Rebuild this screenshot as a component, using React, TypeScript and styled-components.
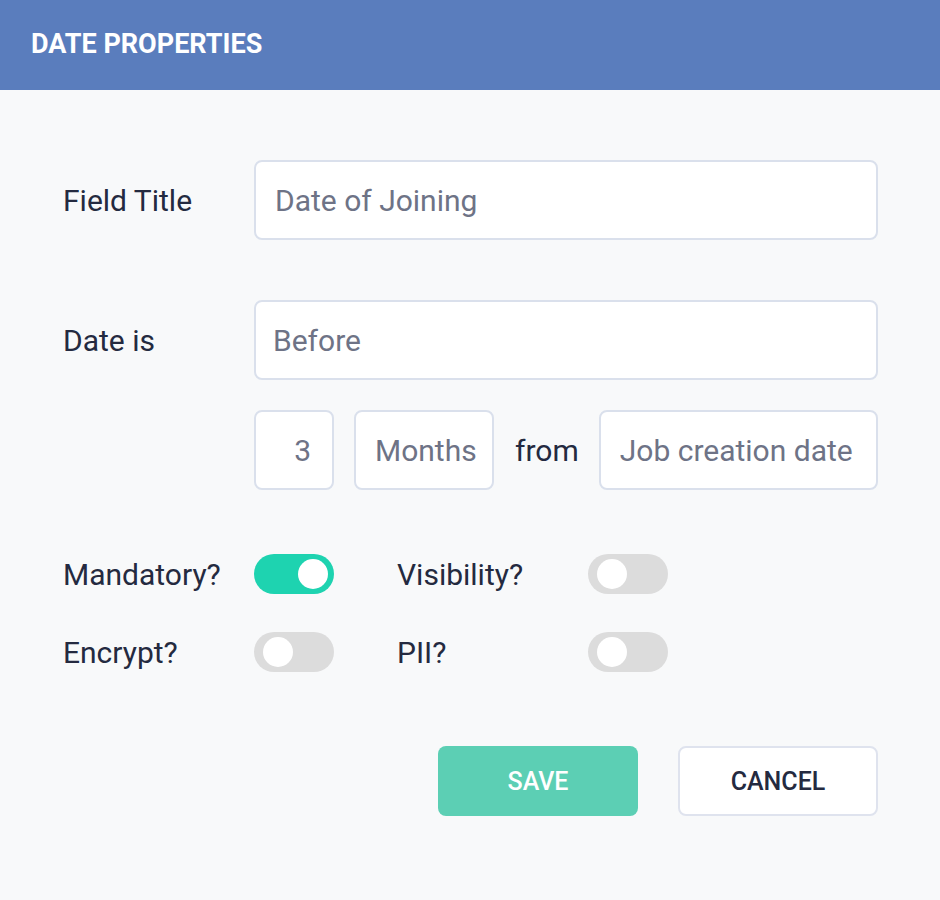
import React, { useState } from 'react';
import styled, { createGlobalStyle } from 'styled-components';

const GlobalStyle = createGlobalStyle`
    body {
        margin: 0;
        font-family: Roboto, "Liberation Sans", sans-serif;
        background: #f8f9fa;
    }
`

type ToggleProps = {
    label: string;
    initValue?: boolean;
}

const Toggle: React.FC<ToggleProps> = ({ label, initValue = false }) => {
    const [on, setOn] = useState(initValue);
    return <>
        <Label>{label}</Label>
        <Switch on={on} onClick={() => setOn(!on)} aria-label={label}>
            <Knob on={on} />
        </Switch>
    </>
}

export default function App() {
    return <Page>
        <GlobalStyle />
        <Header>
            <Title>DATE PROPERTIES</Title>
        </Header>
        <Body>
            <FormRow>
                <Label>Field Title</Label>
                <Field placeholder="Date of Joining" />
            </FormRow>
            <FormRow gap={60}>
                <Label>Date is</Label>
                <Field placeholder="Before" pad={17} />
            </FormRow>
            <RangeRow>
                <NumberField placeholder="3" />
                <Field placeholder="Months" width={140} />
                <FromText>from</FromText>
                <Field placeholder="Job creation date" />
            </RangeRow>
            <ToggleGrid>
                <Toggle label="Mandatory?" initValue />
                <Toggle label="Visibility?" />
                <Toggle label="Encrypt?" />
                <Toggle label="PII?" />
            </ToggleGrid>
            <Actions>
                <SaveButton>SAVE</SaveButton>
                <CancelButton>CANCEL</CancelButton>
            </Actions>
        </Body>
    </Page>
}

const Page = styled.div`
    min-height: 900px;
    background: #f8f9fa;
`

const Header = styled.div`
    height: 90px;
    background-color: #5a7dbd;
    display: flex;
    align-items: center;
    padding-left: 31px;
`

const Title = styled.h1`
    margin: 0;
    color: #ffffff;
    font-size: 27px;
    font-weight: 700;
    padding-bottom: 2px;
`

const Body = styled.div`
    display: flex;
    flex-direction: column;
    padding: 70px 62px 0 63px;
`

const FormRow = styled.div<{ gap?: number }>`
    display: grid;
    grid-template-columns: 191px 1fr;
    align-items: center;
    margin-top: ${props => props.gap ? props.gap : 0}px;
`

const Label = styled.span`
    font-size: 30px;
    color: #242a40;
`

const Field = styled.input<{ width?: number; pad?: number }>`
    box-sizing: border-box;
    height: 80px;
    width: ${props => props.width ? props.width + 'px' : 'auto'};
    flex: ${props => props.width ? 'none' : '1'};
    min-width: 0;
    border: 2px solid #dae0ec;
    border-radius: 8px;
    background: #ffffff;
    padding: 0 0 0 ${props => props.pad ? props.pad : 19}px;
    font-family: Roboto, "Liberation Sans", sans-serif;
    font-size: 30px;
    color: #6e7386;
    outline: none;
    &::placeholder {
        color: #6e7386;
        opacity: 1;
    }
`

const NumberField = styled(Field)`
    width: 80px;
    flex: none;
    text-align: right;
    padding: 0 21px 0 0;
`

const RangeRow = styled.div`
    display: flex;
    align-items: center;
    margin-top: 30px;
    margin-left: 191px;
    gap: 20px;
`

const FromText = styled.span`
    font-size: 30px;
    color: #242a40;
    margin-left: 1px;
`

const ToggleGrid = styled.div`
    display: grid;
    grid-template-columns: 191px 143px 191px 80px;
    grid-auto-rows: 40px;
    row-gap: 38px;
    align-items: center;
    margin-top: 64px;
`

const Switch = styled.button<{ on: boolean }>`
    position: relative;
    width: 80px;
    height: 40px;
    border: none;
    padding: 0;
    border-radius: 20px;
    background-color: ${props => props.on ? '#1ed3b0' : '#dcdcdc'};
    cursor: pointer;
`

const Knob = styled.span<{ on: boolean }>`
    position: absolute;
    top: 5px;
    left: ${props => props.on ? '44px' : '9px'};
    width: 30px;
    height: 30px;
    border-radius: 50%;
    background: #ffffff;
`

const Actions = styled.div`
    display: flex;
    justify-content: flex-end;
    gap: 40px;
    margin-top: 74px;
`

const BaseButton = styled.button`
    box-sizing: border-box;
    width: 200px;
    height: 70px;
    border-radius: 8px;
    font-family: Roboto, "Liberation Sans", sans-serif;
    font-size: 25px;
    font-weight: 500;
    cursor: pointer;
`

const SaveButton = styled(BaseButton)`
    border: none;
    background-color: #5ccfb4;
    color: #ffffff;
`

const CancelButton = styled(BaseButton)`
    border: 2px solid #dfe3ee;
    background-color: #ffffff;
    color: #242a40;
`
